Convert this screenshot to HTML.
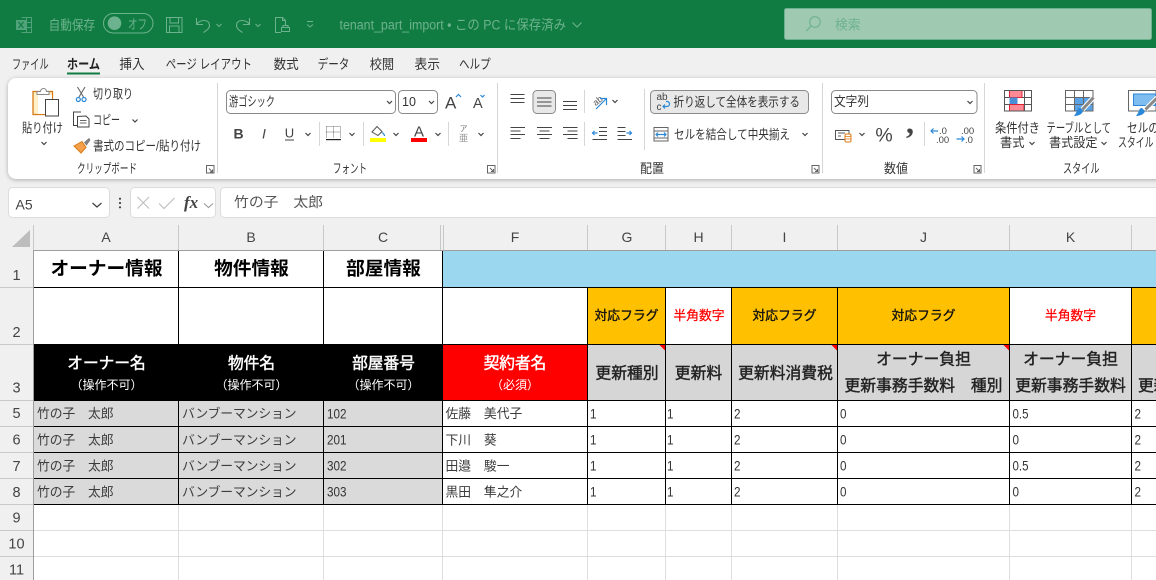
<!DOCTYPE html>
<html lang="ja">
<head>
<meta charset="utf-8">
<title>tenant_part_import</title>
<style>
html,body{margin:0;padding:0;background:#f0f0f0;overflow:hidden;width:1156px;height:580px}
svg{display:block}
text{font-family:"Liberation Sans","Noto Sans CJK JP",sans-serif;white-space:pre}
.t{font-size:13.5px;fill:#6db28e}
.m{font-size:13.5px;fill:#333}
.u{font-size:13px;fill:#333}
.h{font-family:"Liberation Sans",sans-serif;font-size:14px;fill:#444;text-anchor:middle}
.d{font-family:"Noto Sans CJK JP",sans-serif;font-size:12.8px;fill:#3c3c3c}
.n{font-family:"Liberation Sans",sans-serif;font-size:13.5px;fill:#333}
.c{font-family:"Noto Sans CJK JP",sans-serif;text-anchor:middle}
.b{font-weight:bold}
.ch{fill:none;stroke:#444;stroke-width:1.2}
.ic{fill:none;stroke:#555;stroke-width:1}
.bl{fill:none;stroke:#2b88d8;stroke-width:1.2}
.l{fill:#000}
.g{fill:#dedede}
.hd{fill:#c8c8c8}
</style>
</head>
<body>
<svg width="1156" height="580" viewBox="0 0 1156 580" xmlns="http://www.w3.org/2000/svg">
<!-- title bar -->
<rect width="1156" height="48" fill="#107c41"/>
<g fill="none" stroke="#4fa27a" stroke-width="1">
<path d="M21.500 17.500h10v15h-10M21.500 22.500h10M21.500 27.500h10M26.500 17.500v15"/>
</g>
<rect x="16" y="20" width="10" height="10" fill="#4fa27a"/>
<path d="M18.500 22l5 6M23.500 22l-5 6" stroke="#107c41" stroke-width="1.200"/>
<text class="t" x="48.600" y="30" textLength="46.500" lengthAdjust="spacingAndGlyphs">自動保存</text>
<rect x="103.500" y="13.500" width="49.500" height="19.500" rx="9.700" fill="none" stroke="#6db28e"/>
<circle cx="114.500" cy="23.200" r="6.800" fill="#6db28e"/>
<text class="t" x="128" y="29" textLength="19" lengthAdjust="spacingAndGlyphs">オフ</text>
<path d="M166.500 17.500h15.500v15h-15.500zM170 17.500v5.500h8.500v-5.500M169.500 32.500v-6.500h9.500v6.500" fill="none" stroke="#6db28e"/>
<path d="M196.500 18v6.500h6.500M196.500 24.500C200 19 209.500 19 209.500 25.500C209.500 28.500 206.500 30.500 203.500 32.500" fill="none" stroke="#6db28e" stroke-width="1.100"/>
<path d="M216.500 24l2.500 2.500 2.500-2.500" fill="none" stroke="#6db28e"/>
<path d="M249.500 18v6.500h-6.500M249.500 24.500C246 19 236.500 19 236.500 25.500C236.500 28.500 239.500 30.500 242.500 32.500" fill="none" stroke="#6db28e" stroke-width="1.100"/>
<path d="M255.500 24l2.500 2.500 2.500-2.500" fill="none" stroke="#6db28e"/>
<path d="M281 32.500h-5.500v-15h7l3 3v5M282.500 17.500v3h3M281.500 27.500h8v4h-8zM283 27.500v-2h5v2" fill="none" stroke="#6db28e"/>
<path d="M307 21.500h6M307 24.500l3 2.500 3-2.500" fill="none" stroke="#6db28e"/>
<text class="t" x="339.500" y="29.500" textLength="226.500" lengthAdjust="spacingAndGlyphs">tenant_part_import • この PC に保存済み</text>
<path d="M572.500 22.500l4.500 4.500 4.500-4.500" fill="none" stroke="#6db28e" stroke-width="1.100"/>
<rect x="784.500" y="8.500" width="367" height="31" rx="2" fill="#a0c9b2" stroke="#6db28e"/>
<circle cx="815" cy="22" r="5.300" fill="none" stroke="#6db28e" stroke-width="1.100"/>
<path d="M811 26l-4.500 5" stroke="#6db28e" stroke-width="1.300" fill="none"/>
<text class="t" x="835" y="29.500" textLength="25.500" lengthAdjust="spacingAndGlyphs">検索</text>

<!-- tabs -->
<text class="m" x="12" y="69" textLength="36.600" lengthAdjust="spacingAndGlyphs">ファイル</text>
<text class="m b" x="67" y="69" textLength="33" lengthAdjust="spacingAndGlyphs" style="fill:#222">ホーム</text>
<rect x="67" y="72.500" width="33" height="2" fill="#107c41"/>
<text class="m" x="119.400" y="69" textLength="25.200" lengthAdjust="spacingAndGlyphs">挿入</text>
<text class="m" x="165.700" y="69" textLength="86.300" lengthAdjust="spacingAndGlyphs">ページ レイアウト</text>
<text class="m" x="273.600" y="69" textLength="25" lengthAdjust="spacingAndGlyphs">数式</text>
<text class="m" x="317.600" y="69" textLength="31.800" lengthAdjust="spacingAndGlyphs">データ</text>
<text class="m" x="369.700" y="69" textLength="24.400" lengthAdjust="spacingAndGlyphs">校閲</text>
<text class="m" x="414.500" y="69" textLength="25.500" lengthAdjust="spacingAndGlyphs">表示</text>
<text class="m" x="459" y="69" textLength="31.600" lengthAdjust="spacingAndGlyphs">ヘルプ</text>

<!-- ribbon -->
<rect x="8" y="78" width="1170" height="101" rx="8" fill="#fff" style="filter:drop-shadow(0 1px 2px rgba(0,0,0,.28))"/>
<g style="fill:#d6d6d6">
<rect x="217" y="83" width="1" height="90"/><rect x="497" y="83" width="1" height="90"/><rect x="822" y="83" width="1" height="90"/><rect x="984" y="83" width="1" height="90"/>
<rect x="319" y="122" width="1" height="24"/><rect x="363" y="122" width="1" height="24"/><rect x="448" y="122" width="1" height="24"/>
<rect x="584" y="90" width="1" height="23"/><rect x="584" y="122" width="1" height="24"/><rect x="644" y="89" width="1" height="61"/><rect x="924" y="122" width="1" height="24"/>
</g>
<!-- paste -->
<rect x="33" y="91.500" width="19.500" height="23" fill="#fff0c8" stroke="#d87a16" stroke-width="1.300"/>
<rect x="38" y="95" width="14" height="19" fill="#fff"/>
<path d="M37 94.500v-3h3.500a3 3 0 0 1 6 0h2.500v3z" fill="#fff" stroke="#888"/>
<rect x="45.500" y="99.500" width="13" height="16.500" fill="#fff" stroke="#444"/>
<text class="u" x="22" y="132.500" textLength="41" lengthAdjust="spacingAndGlyphs">貼り付け</text>
<path class="ch" d="M41.500 142l2.500 2.500 2.500-2.500"/>
<!-- scissors -->
<path d="M77.500 87l6 10M85 87l-6 10" fill="none" stroke="#666" stroke-width="1.100"/>
<circle cx="78.300" cy="99.500" r="2" fill="none" stroke="#2b88d8" stroke-width="1.200"/><circle cx="84" cy="99.500" r="2" fill="none" stroke="#2b88d8" stroke-width="1.200"/>
<text class="u" x="93" y="98.500" textLength="40" lengthAdjust="spacingAndGlyphs">切り取り</text>
<!-- copy -->
<path class="ic" d="M78 125.500h-4.500v-13.500h7.500" style="stroke:#444"/>
<path class="ic" d="M77.500 116.500v10.500h11.500v-8l-3-3z" style="stroke:#444"/>
<path d="M80 120.500h6.500M80 123h6.500" stroke="#666"/>
<text class="u" x="93" y="124.500" textLength="27" lengthAdjust="spacingAndGlyphs">コピー</text>
<path class="ch" d="M132.500 119.500l2.500 2.500 2.500-2.500"/>
<!-- painter -->
<path d="M74 146l8-4.500 4 6-5 5.500z" fill="#f5a04a" stroke="#d87a16"/>
<path d="M84.500 142.500l4.500-4 1 1.500-3.500 5z" fill="#888" stroke="#666" stroke-width=".6"/>
<text class="u" x="93" y="150.500" textLength="108" lengthAdjust="spacingAndGlyphs">書式のコピー/貼り付け</text>
<text class="u" x="77" y="173" textLength="60" lengthAdjust="spacingAndGlyphs">クリップボード</text>
<path d="M206.500 166v-.500h7.500v7.500h-7.500v-7zM209 168.500l3.500 3.500M212.500 169.500v2.500h-2.500" fill="none" stroke="#666"/>

<!-- font -->
<rect x="226.500" y="90.500" width="169" height="23" rx="4" fill="#fff" stroke="#8a8a8a"/>
<text class="u" x="229" y="106" textLength="46" lengthAdjust="spacingAndGlyphs">游ゴシック</text>
<path class="ch" d="M387 101l2.500 2.500 2.500-2.500"/>
<rect x="398.500" y="90.500" width="39" height="23" rx="4" fill="#fff" stroke="#8a8a8a"/>
<text x="402" y="106" style="font-size:12.500px;fill:#333">10</text>
<path class="ch" d="M429 101l2.500 2.500 2.500-2.500"/>
<text x="445" y="108.500" style="font-size:17px;fill:#444">A</text>
<path class="bl" d="M456 97l2.500-2.500 2.500 2.500"/>
<text x="473" y="108" style="font-size:14.500px;fill:#444">A</text>
<path class="bl" d="M480.500 95l2 2 2-2"/>
<text x="238.500" y="138.500" text-anchor="middle" style="font-size:14px;font-weight:bold;fill:#444">B</text>
<text x="264" y="138.500" text-anchor="middle" style="font-size:14px;font-style:italic;fill:#444">I</text>
<text x="289.500" y="137.500" text-anchor="middle" style="font-size:13px;fill:#444">U</text>
<rect x="285" y="139.500" width="9" height="1" fill="#444"/>
<path class="ch" d="M305.500 133l2.500 2.500 2.500-2.500"/>
<path d="M326.500 126.500h14v11M326.500 126.500v11M333.500 126.500v11M326.500 132h14" fill="none" stroke="#777" stroke-dasharray="1 1"/>
<rect x="326" y="139" width="15" height="1.200" fill="#222"/>
<path class="ch" d="M349.500 133l2.500 2.500 2.500-2.500"/>
<path d="M372 132l5-5.500 5 5-4 4z" fill="#fff" stroke="#555"/>
<path d="M382 132.500c1.500 1 2.500 2 2.500 3.500" class="bl" stroke-width="1.600"/>
<rect x="370" y="138" width="16" height="4" fill="#ffff00"/>
<path class="ch" d="M393.500 133l2.500 2.500 2.500-2.500"/>
<text x="419" y="136.500" text-anchor="middle" style="font-size:15px;fill:#444">A</text>
<rect x="411" y="138" width="16" height="4" fill="#f00"/>
<path class="ch" d="M435.500 133l2.500 2.500 2.500-2.500"/>
<text class="c" x="463.500" y="131.500" style="font-size:8px;fill:#777">ア</text>
<text class="c" x="463.500" y="141.500" style="font-size:9.500px;fill:#999">亜</text>
<path class="ch" d="M478.500 133l2.500 2.500 2.500-2.500"/>
<text class="u" x="333" y="173" textLength="34" lengthAdjust="spacingAndGlyphs">フォント</text>
<path d="M487.500 165.500h7.500v7.500h-7.500zM490 168l3.500 3.500M493.500 169v2.500h-2.500" fill="none" stroke="#666"/>

<!-- alignment -->
<path d="M510.500 94.500h14M510.500 98.500h14M510.500 102.500h14" stroke="#444" fill="none"/>
<rect x="533" y="90.500" width="22.500" height="23" rx="4" fill="#e8e8e8" stroke="#8a8a8a"/>
<path d="M537 98h14.500M537 102h14.500M537 106h14.500" stroke="#444" fill="none"/>
<path d="M563 101.500h14M563 105.500h14M563 109.500h14" stroke="#444" fill="none"/>
<path d="M510.500 127.500h14.500M510.500 131h10M510.500 134.500h14.500M510.500 138.500h10" stroke="#444" fill="none"/>
<path d="M537 127.500h15M539.500 131h10M537 134.500h15M539.500 138.500h10" stroke="#444" fill="none"/>
<path d="M563 127.500h14.500M567.500 131h10M563 134.500h14.500M567.500 138.500h10" stroke="#444" fill="none"/>
<text x="592" y="104" transform="rotate(-40 597 100)" style="font-size:9px;fill:#555">ab</text>
<path class="bl" d="M596 109l10-10M600 98.500h6.500v6.500"/>
<path class="ch" d="M612.500 100l2.500 2.500 2.500-2.500"/>
<path d="M599 127.500h8M599 131.500h8M599 135.500h8M592.500 139.500h14.500" stroke="#444" fill="none"/>
<path class="bl" d="M597.500 133h-5M594.500 131l-2 2 2 2"/>
<path d="M617.500 127.500h8M617.500 131.500h8M617.500 135.500h8M617.500 139.500h14.500" stroke="#444" fill="none"/>
<path class="bl" d="M626.500 133h5M629.500 131l2 2-2 2"/>
<rect x="650.500" y="90.500" width="158" height="23" rx="4" fill="#e8e8e8" stroke="#8a8a8a"/>
<text x="656.500" y="100" style="font-size:10px;fill:#444">ab</text>
<text x="656.500" y="110" style="font-size:10px;fill:#444">c</text>
<path class="bl" d="M663 106.500h4a2.500 2.500 0 0 0 0-5h-1M665 104.500l-2 2 2 2"/>
<text class="u" x="673.500" y="106.500" textLength="126.500" lengthAdjust="spacingAndGlyphs">折り返して全体を表示する</text>
<path d="M654 127.500h14v13.500h-14zM654 131h14M654 138h14" fill="none" stroke="#666"/>
<path class="bl" d="M656 134.500h10M658 132.500l-2 2 2 2M664 132.500l2 2-2 2"/>
<text class="u" x="674" y="139" textLength="116" lengthAdjust="spacingAndGlyphs">セルを結合して中央揃え</text>
<path class="ch" d="M802.500 133l2.500 2.500 2.500-2.500"/>
<text class="u" x="640" y="173" textLength="24" lengthAdjust="spacingAndGlyphs">配置</text>
<path d="M812 165.500h7v7.500h-7zM814 168l3.500 3.500M817.500 169v2.500h-2.500" fill="none" stroke="#666"/>

<!-- number -->
<rect x="831.500" y="90.500" width="145.500" height="23" rx="4" fill="#fff" stroke="#8a8a8a"/>
<text class="u" x="834" y="106" textLength="35" lengthAdjust="spacingAndGlyphs">文字列</text>
<path class="ch" d="M967.500 101l2.500 2.500 2.500-2.500"/>
<path d="M835.500 130.500h13.500v9h-13.500zM838 133h7M838 136h3" fill="none" stroke="#555"/>
<rect x="845" y="134" width="6" height="8" rx="1.500" fill="#fff" stroke="#e07a16"/>
<path d="M845 136.500h6M845 139h6" stroke="#e07a16" stroke-width=".8"/>
<path class="ch" d="M859.500 133l2.500 2.500 2.500-2.500"/>
<text x="884" y="141.500" text-anchor="middle" style="font-size:19.500px;fill:#444">%</text>
<text x="910" y="133" text-anchor="middle" style="font-family:'Liberation Serif',serif;font-size:32px;font-weight:bold;fill:#444">,</text>
<text x="939" y="134" style="font-size:9.500px;fill:#444">.0</text>
<text x="936" y="143" style="font-size:9.500px;fill:#444">.00</text>
<path class="bl" d="M938 131h-7M933.500 128.500l-2.500 2.500 2.500 2.500"/>
<text x="961" y="134" style="font-size:9.500px;fill:#444">.00</text>
<text x="965" y="143" style="font-size:9.500px;fill:#444">.0</text>
<path class="bl" d="M956.500 139h7.500M961.500 136.500l2.500 2.500-2.500 2.500"/>
<text class="u" x="884" y="173" textLength="24" lengthAdjust="spacingAndGlyphs">数値</text>
<path d="M974 165.500h7v7.500h-7zM976 168l3.500 3.500M979.500 169v2.500h-2.500" fill="none" stroke="#666"/>

<!-- styles -->
<rect x="1004.500" y="90.500" width="27" height="20.500" fill="#fff"/>
<rect x="1009.500" y="90.500" width="12.500" height="7" fill="#ff8a96" stroke="#e02030"/>
<rect x="1009.500" y="97.500" width="8" height="7" fill="#4a90d9"/>
<rect x="1009.500" y="104.500" width="14.500" height="6.500" fill="#ff8a96" stroke="#e02030"/>
<path d="M1004.500 90.500h27v20.500h-27zM1004.500 97.500h5M1022 97.500h9.500M1004.500 104.500h5M1024 104.500h7.500M1024.500 90.500v20.500" fill="none" stroke="#555"/>
<rect x="1065.500" y="90.500" width="27.500" height="20.500" fill="#fff"/>
<rect x="1074.500" y="97.500" width="18.500" height="13.500" fill="#5ba3e6"/>
<path d="M1065.500 90.500h27.500v20.500h-27.500zM1065.500 97.500h27.500M1065.500 104.500h27.500M1074.500 90.500v20.500M1083.500 90.500v20.500" fill="none" stroke="#666"/>
<path d="M1093.500 97.500l-11 12" stroke="#fff" stroke-width="5"/>
<path d="M1093.500 97.500l-11 12" stroke="#888" stroke-width="3"/>
<path d="M1074 116c3 0 8-1 9-5l-3-3c-3 0-3 3-4 5z" fill="#2b88d8"/>
<rect x="1128.500" y="90.500" width="27.500" height="20.500" fill="#fff" stroke="#666"/>
<rect x="1133.500" y="94" width="22" height="11.500" fill="#7fbcf0" stroke="#2b88d8"/>
<path d="M1157.500 97.500l-12 12" stroke="#fff" stroke-width="5"/>
<path d="M1157.500 97.500l-12 12" stroke="#888" stroke-width="3"/>
<path d="M1136 116c3 0 8-1 9-5l-3-3c-3 0-3 3-4 5z" fill="#2b88d8"/>
<text class="u" x="995" y="132.500" textLength="45" lengthAdjust="spacingAndGlyphs">条件付き</text>
<text class="u" x="1000" y="147" textLength="24.500" lengthAdjust="spacingAndGlyphs">書式</text>
<path class="ch" d="M1029.500 142l2.500 2.500 2.500-2.500"/>
<text class="u" x="1046.500" y="132.500" textLength="64.500" lengthAdjust="spacingAndGlyphs">テーブルとして</text>
<text class="u" x="1049" y="147" textLength="48.500" lengthAdjust="spacingAndGlyphs">書式設定</text>
<path class="ch" d="M1101.500 142l2.500 2.500 2.500-2.500"/>
<text class="u" x="1127" y="132.500" textLength="32" lengthAdjust="spacingAndGlyphs">セルの</text>
<text class="u" x="1118" y="147" textLength="35.500" lengthAdjust="spacingAndGlyphs">スタイル</text>
<text class="u" x="1063" y="173" textLength="36.500" lengthAdjust="spacingAndGlyphs">スタイル</text>

<!-- formula bar -->
<rect x="8.500" y="187.500" width="101" height="30" rx="4" fill="#fff" stroke="#dcdcdc"/>
<text x="15.500" y="209.500" style="font-size:14px;fill:#444">A5</text>
<path class="ch" d="M92.500 203l4.500 4 4.500-4" style="stroke-width:1.300"/>
<circle cx="120" cy="198.700" r="1.100" fill="#444"/><circle cx="120" cy="203" r="1.100" fill="#444"/><circle cx="120" cy="207.300" r="1.100" fill="#444"/>
<rect x="130.500" y="187.500" width="85" height="30" rx="4" fill="#fff" stroke="#dcdcdc"/>
<path d="M137.500 197l11.500 11.500M149 197l-11.500 11.500" stroke="#c0c0c0" stroke-width="1.200" fill="none"/>
<path d="M159 203.500l5 5 10.500-10.500" stroke="#c0c0c0" stroke-width="1.200" fill="none"/>
<text x="184" y="208" style="font-family:'Liberation Serif',serif;font-size:17px;font-style:italic;font-weight:bold;fill:#444">fx</text>
<path d="M204 203.500l4.500 4 4.500-4" fill="none" stroke="#999" stroke-width="1.100"/>
<rect x="220.500" y="187.500" width="950" height="30" rx="4" fill="#fff" stroke="#dcdcdc"/>
<text x="234" y="207" textLength="89" lengthAdjust="spacingAndGlyphs" style="font-family:'Noto Sans CJK JP',sans-serif;font-size:14px;fill:#555">竹の子　太郎</text>

<!-- headers -->
<rect x="0" y="225" width="1156" height="26" fill="#f0f0f0"/>
<rect x="0" y="225" width="34" height="355" fill="#f0f0f0"/>
<polygon points="30,230 30,247 12,247" fill="#bdbdbd"/>
<g class="hd">
<rect x="33" y="225" width="1" height="25"/><rect x="178" y="225" width="1" height="25"/><rect x="323" y="225" width="1" height="25"/><rect x="440" y="225" width="1" height="25"/><rect x="443" y="225" width="1" height="25"/><rect x="587" y="225" width="1" height="25"/><rect x="665" y="225" width="1" height="25"/><rect x="731" y="225" width="1" height="25"/><rect x="837" y="225" width="1" height="25"/><rect x="1009" y="225" width="1" height="25"/><rect x="1131" y="225" width="1" height="25"/>
<rect x="0" y="287" width="33" height="1"/><rect x="0" y="344" width="33" height="1"/><rect x="0" y="400" width="33" height="1"/><rect x="0" y="426" width="33" height="1"/><rect x="0" y="452" width="33" height="1"/><rect x="0" y="478" width="33" height="1"/><rect x="0" y="504" width="33" height="1"/><rect x="0" y="530" width="33" height="1"/><rect x="0" y="556" width="33" height="1"/>
</g>
<rect x="33" y="250" width="1123" height="1" fill="#9e9e9e"/>
<rect x="33" y="250" width="1" height="330" fill="#9e9e9e"/>
<text class="h" x="106" y="242">A</text><text class="h" x="251" y="242">B</text><text class="h" x="383" y="242">C</text><text class="h" x="515" y="242">F</text><text class="h" x="627" y="242">G</text><text class="h" x="698.500" y="242">H</text><text class="h" x="784.500" y="242">I</text><text class="h" x="923.500" y="242">J</text><text class="h" x="1070.500" y="242">K</text>
<text class="h" x="16.500" y="280" style="font-size:14.500px">1</text><text class="h" x="16.500" y="337" style="font-size:14.500px">2</text><text class="h" x="16.500" y="392.500" style="font-size:14.500px">3</text><text class="h" x="16.500" y="418" style="font-size:14.500px">5</text><text class="h" x="16.500" y="444.500" style="font-size:14.500px">6</text><text class="h" x="16.500" y="471" style="font-size:14.500px">7</text><text class="h" x="16.500" y="497" style="font-size:14.500px">8</text><text class="h" x="16.500" y="522.500" style="font-size:14.500px">9</text><text class="h" x="16.500" y="548.500" style="font-size:14.500px">10</text><text class="h" x="16.500" y="574.500" style="font-size:14.500px">11</text>

<!-- sheet -->
<rect x="34" y="251" width="1122" height="329" fill="#fff"/>
<rect x="443" y="251" width="713" height="36" fill="#9bd7ef"/>
<rect x="588" y="288" width="77" height="56" fill="#ffc000"/>
<rect x="732" y="288" width="105" height="56" fill="#ffc000"/>
<rect x="838" y="288" width="171" height="56" fill="#ffc000"/>
<rect x="1132" y="288" width="24" height="56" fill="#ffc000"/>
<rect x="34" y="345" width="408" height="55" fill="#000"/>
<rect x="443" y="345" width="144" height="55" fill="#f00"/>
<rect x="588" y="345" width="568" height="55" fill="#d6d6d6"/>
<rect x="34" y="401" width="408" height="103" fill="#dadada"/>

<polygon points="659.500,345 665,345 665,350.500" fill="#f00"/>
<polygon points="831.500,345 837,345 837,350.500" fill="#f00"/>
<polygon points="1003.500,345 1009,345 1009,350.500" fill="#f00"/>

<g class="g">
<rect x="34" y="530" width="1122" height="1"/><rect x="34" y="556" width="1122" height="1"/>
<rect x="178" y="505" width="1" height="75"/><rect x="323" y="505" width="1" height="75"/><rect x="442" y="505" width="1" height="75"/><rect x="587" y="505" width="1" height="75"/><rect x="665" y="505" width="1" height="75"/><rect x="731" y="505" width="1" height="75"/><rect x="837" y="505" width="1" height="75"/><rect x="1009" y="505" width="1" height="75"/><rect x="1131" y="505" width="1" height="75"/>
</g>
<g class="l">
<rect x="34" y="287" width="1122" height="1"/><rect x="34" y="344" width="1122" height="1"/><rect x="34" y="400" width="1122" height="1"/><rect x="34" y="426" width="1122" height="1"/><rect x="34" y="452" width="1122" height="1"/><rect x="34" y="478" width="1122" height="1"/><rect x="34" y="504" width="1122" height="1"/>
<rect x="178" y="251" width="1" height="94"/><rect x="323" y="251" width="1" height="94"/>
<rect x="178" y="400" width="1" height="105"/><rect x="323" y="400" width="1" height="105"/>
<rect x="442" y="251" width="1" height="254"/>
<rect x="587" y="288" width="1" height="217"/><rect x="665" y="288" width="1" height="217"/><rect x="731" y="288" width="1" height="217"/><rect x="837" y="288" width="1" height="217"/><rect x="1009" y="288" width="1" height="217"/><rect x="1131" y="288" width="1" height="217"/>
</g>

<!-- row 1 -->
<g class="b" style="font-size:18.700px;fill:#000">
<text class="c" x="106.500" y="275" textLength="112" lengthAdjust="spacingAndGlyphs">オーナー情報</text>
<text class="c" x="251.500" y="275">物件情報</text>
<text class="c" x="383.500" y="275">部屋情報</text>
</g>
<!-- row 2 -->
<g style="font-size:12.800px;fill:#111;stroke:#111;stroke-width:.35">
<text class="c" x="626.500" y="320">対応フラグ</text>
<text class="c" x="784.500" y="320">対応フラグ</text>
<text class="c" x="923.500" y="320">対応フラグ</text>
</g>
<g style="font-size:12.800px;fill:#f00;stroke:#f00;stroke-width:.25">
<text class="c" x="699" y="320">半角数字</text>
<text class="c" x="1070.500" y="320">半角数字</text>
</g>
<!-- row 3 -->
<g style="font-size:15.700px;fill:#fff;stroke:#fff;stroke-width:.45">
<text class="c" x="106.500" y="368.500">オーナー名</text>
<text class="c" x="251.500" y="368.500">物件名</text>
<text class="c" x="383.500" y="368.500">部屋番号</text>
<text class="c" x="515" y="368.500">契約者名</text>
</g>
<g style="font-size:12px;fill:#fff">
<text class="c" x="106.500" y="389">（操作不可）</text>
<text class="c" x="251.500" y="389">（操作不可）</text>
<text class="c" x="383.500" y="389">（操作不可）</text>
<text class="c" x="515" y="389">（必須）</text>
</g>
<g style="font-size:15.800px;fill:#222;stroke:#222;stroke-width:.4">
<text class="c" x="627" y="378.300">更新種別</text>
<text class="c" x="698.500" y="378.300">更新料</text>
<text class="c" x="785.500" y="378.300">更新料消費税</text>
<text class="c" x="923.500" y="364.300">オーナー負担</text>
<text class="c" x="923.500" y="391">更新事務手数料　種別</text>
<text class="c" x="1070.500" y="364.300">オーナー負担</text>
<text class="c" x="1070.500" y="391">更新事務手数料</text>
<text x="1138" y="391" style="font-family:'Noto Sans CJK JP',sans-serif">更新事務手数料</text>
</g>

<!-- data -->
<text class="d" x="37" y="418" textLength="76.600">竹の子　太郎</text><text class="d" x="182" y="418" textLength="114.500">バンブーマンション</text><text class="n" x="327" y="418.500" textLength="19.500" lengthAdjust="spacingAndGlyphs">102</text><text class="d" x="445.500" y="418">佐藤　美代子</text>
<text class="d" x="37" y="444.500" textLength="76.600">竹の子　太郎</text><text class="d" x="182" y="444.500" textLength="114.500">バンブーマンション</text><text class="n" x="327" y="444.500" textLength="19.500" lengthAdjust="spacingAndGlyphs">201</text><text class="d" x="445.500" y="444.500">下川　葵</text>
<text class="d" x="37" y="470.500" textLength="76.600">竹の子　太郎</text><text class="d" x="182" y="470.500" textLength="114.500">バンブーマンション</text><text class="n" x="327" y="470.500" textLength="19.500" lengthAdjust="spacingAndGlyphs">302</text><text class="d" x="445.500" y="470.500">田邉　駿一</text>
<text class="d" x="37" y="496.500" textLength="76.600">竹の子　太郎</text><text class="d" x="182" y="496.500" textLength="114.500">バンブーマンション</text><text class="n" x="327" y="496.500" textLength="19.500" lengthAdjust="spacingAndGlyphs">303</text><text class="d" x="445.500" y="496.500">黒田　隼之介</text>
<g>
<text class="n" x="590" y="418.500" textLength="6.500" lengthAdjust="spacingAndGlyphs">1</text><text class="n" x="667" y="418.500" textLength="6.500" lengthAdjust="spacingAndGlyphs">1</text><text class="n" x="734" y="418.500" textLength="6.500" lengthAdjust="spacingAndGlyphs">2</text><text class="n" x="840" y="418.500" textLength="6.500" lengthAdjust="spacingAndGlyphs">0</text><text class="n" x="1012.500" y="418.500" textLength="16" lengthAdjust="spacingAndGlyphs">0.5</text><text class="n" x="1134.500" y="418.500" textLength="6.500" lengthAdjust="spacingAndGlyphs">2</text>
<text class="n" x="590" y="444.500" textLength="6.500" lengthAdjust="spacingAndGlyphs">1</text><text class="n" x="667" y="444.500" textLength="6.500" lengthAdjust="spacingAndGlyphs">1</text><text class="n" x="734" y="444.500" textLength="6.500" lengthAdjust="spacingAndGlyphs">2</text><text class="n" x="840" y="444.500" textLength="6.500" lengthAdjust="spacingAndGlyphs">0</text><text class="n" x="1012.500" y="444.500" textLength="6.500" lengthAdjust="spacingAndGlyphs">0</text><text class="n" x="1134.500" y="444.500" textLength="6.500" lengthAdjust="spacingAndGlyphs">2</text>
<text class="n" x="590" y="470.500" textLength="6.500" lengthAdjust="spacingAndGlyphs">1</text><text class="n" x="667" y="470.500" textLength="6.500" lengthAdjust="spacingAndGlyphs">1</text><text class="n" x="734" y="470.500" textLength="6.500" lengthAdjust="spacingAndGlyphs">2</text><text class="n" x="840" y="470.500" textLength="6.500" lengthAdjust="spacingAndGlyphs">0</text><text class="n" x="1012.500" y="470.500" textLength="16" lengthAdjust="spacingAndGlyphs">0.5</text><text class="n" x="1134.500" y="470.500" textLength="6.500" lengthAdjust="spacingAndGlyphs">2</text>
<text class="n" x="590" y="496.500" textLength="6.500" lengthAdjust="spacingAndGlyphs">1</text><text class="n" x="667" y="496.500" textLength="6.500" lengthAdjust="spacingAndGlyphs">1</text><text class="n" x="734" y="496.500" textLength="6.500" lengthAdjust="spacingAndGlyphs">2</text><text class="n" x="840" y="496.500" textLength="6.500" lengthAdjust="spacingAndGlyphs">0</text><text class="n" x="1012.500" y="496.500" textLength="6.500" lengthAdjust="spacingAndGlyphs">0</text><text class="n" x="1134.500" y="496.500" textLength="6.500" lengthAdjust="spacingAndGlyphs">2</text>
</g>
</svg>
</body>
</html>
